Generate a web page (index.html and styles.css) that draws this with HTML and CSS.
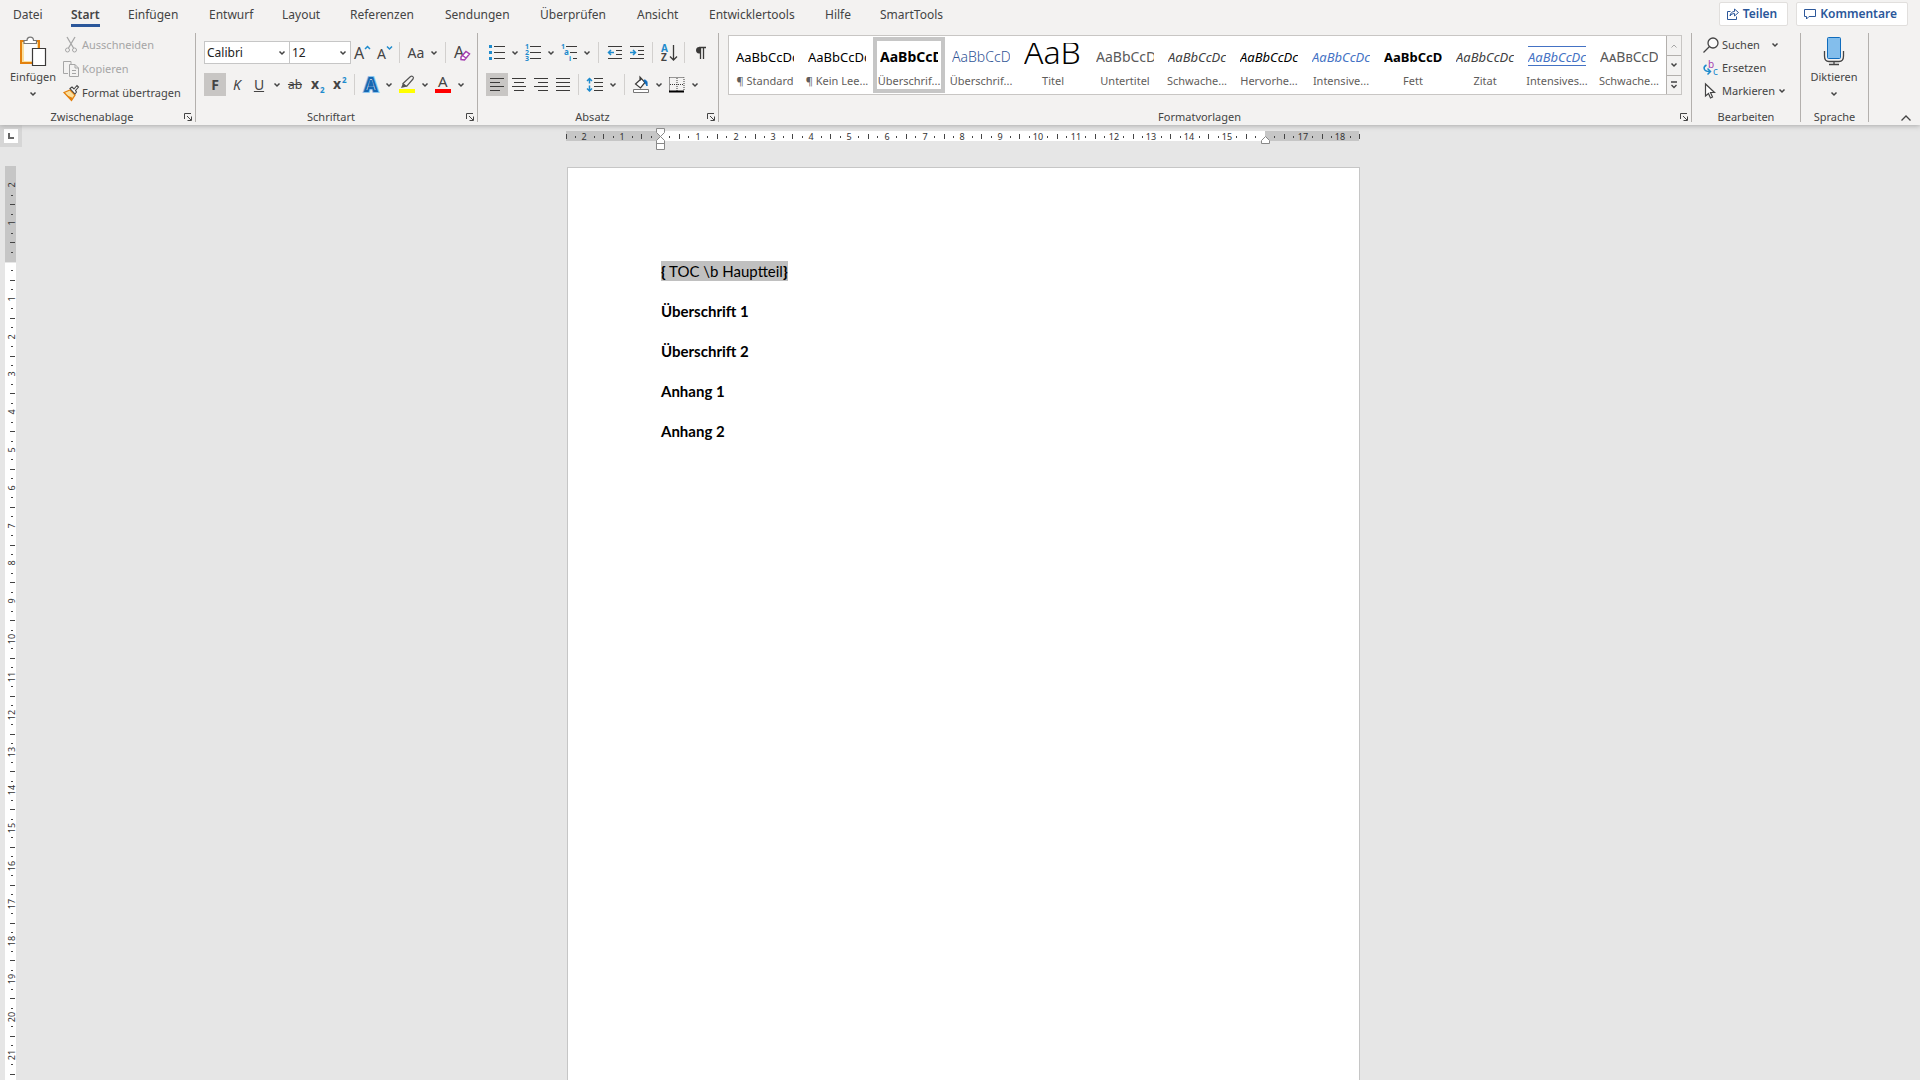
FILE: index.html
```html
<!DOCTYPE html>
<html lang="de">
<head>
<meta charset="utf-8">
<title>Word</title>
<link rel="stylesheet" href="styles.css">
</head>
<body>
<svg class="defs" aria-hidden="true">
  <symbol id="chev" viewBox="0 0 8 6"><path d="M1.500 1.500L4 4L6.500 1.500" fill="none" stroke="currentColor" stroke-width="1.500"/></symbol>
  <symbol id="launch" viewBox="0 0 8 8"><path d="M.5 6V.5H7M3 3L7 7M7.500 3.500V7.500H3.500" fill="none" stroke="currentColor"/></symbol>
</svg>
<header class="ribbon">
  <div class="topbar">
    <nav class="tabs">
      <a href="#">Datei</a>
      <a href="#" class="active">Start</a>
      <a href="#">Einfügen</a>
      <a href="#">Entwurf</a>
      <a href="#">Layout</a>
      <a href="#">Referenzen</a>
      <a href="#">Sendungen</a>
      <a href="#">Überprüfen</a>
      <a href="#">Ansicht</a>
      <a href="#">Entwicklertools</a>
      <a href="#">Hilfe</a>
      <a href="#">SmartTools</a>
    </nav>
    <div class="share">
      <button type="button"><svg width="12" height="12" viewBox="0 0 12 12"><path d="M3.500 3.500H.5V11.500H9.500V8.500M3 8C3.500 5 5 3.500 7.500 3.500V1L11.500 4.500L7.500 8V5.500C5.500 5.500 4 6.500 3 8Z" fill="none" stroke="currentColor"/></svg>Teilen</button>
      <button type="button"><svg width="12" height="12" viewBox="0 0 12 12"><path d="M.5 1.500H11.500V8.500H5L2.500 11V8.500H.5Z" fill="none" stroke="currentColor"/></svg>Kommentare</button>
    </div>
  </div>

  <div class="groups">
    <section class="group clipboard">
      <div class="content">
        <button type="button" class="big">
          <svg width="28" height="31" viewBox="0 0 28 31"><path d="M2 5H20V27H2Z" fill="#fbdf9d" stroke="#e3810f" stroke-width="2"/><path d="M5 8H18V25H5Z" fill="#fafafa"/><path d="M5 7.500V4.500H8C8 0 14.500 0 14.500 4.500H17.500V7.500Z" fill="#fff" stroke="#777" stroke-width="1.200"/><path d="M13.500 12.500H26.500V29.500H13.500Z" fill="#fff" stroke="#3b3a39" stroke-width="1.200"/></svg>
          <span>Einfügen</span>
          <svg class="chev"><use href="#chev"/></svg>
        </button>
        <div class="stack wide">
          <button type="button" disabled><svg width="16" height="16" viewBox="0 0 16 16"><path d="M4 0L10.500 11M12 0L5.500 11" fill="none" stroke="currentColor" stroke-width="1.300"/><circle cx="4.500" cy="13" r="2" fill="none" stroke="currentColor"/><circle cx="11.500" cy="13" r="2" fill="none" stroke="currentColor"/></svg>Ausschneiden</button>
          <button type="button" disabled><svg width="16" height="16" viewBox="0 0 16 16"><path d="M5 12.500H.5V.5H8V3M6.500 3.500H12L15.500 7V15.500H6.500ZM12 3.500V7H15.500M9 9.500H13M9 12.500H13" fill="none" stroke="currentColor"/></svg>Kopieren</button>
          <button type="button"><svg width="16" height="16" viewBox="0 0 16 16"><path d="M1 7.500L7 5L12 10L8.500 15.500Z" fill="#fbdf9d" stroke="#e3810f" stroke-width="1.300"/><path d="M3 10L10 13L8.500 15.500Z" fill="#e3810f"/><path d="M7 3.500L9 2L11 4L14 .5L15.500 2L12.500 5.500L13.500 7L12 9Z" fill="#fff" stroke="#444" stroke-width="1.100"/></svg>Format übertragen</button>
        </div>
      </div>
      <div class="title"><span>Zwischenablage</span><button type="button" class="launch" aria-label="Zwischenablage öffnen"><svg><use href="#launch"/></svg></button></div>
    </section>

    <section class="group font">
      <div class="content rows">
        <div class="row">
          <label class="combo"><select aria-label="Schriftart"><option>Calibri</option></select><svg class="chev"><use href="#chev"/></svg></label>
          <label class="combo size"><select aria-label="Schriftgrad"><option>12</option></select><svg class="chev"><use href="#chev"/></svg></label>
          <button type="button" class="tool" aria-label="Vergrößern"><svg width="18" height="20" viewBox="0 0 18 20"><text x="1" y="16" font-size="16" fill="#444">A</text><path d="M12 6L14.500 3.500L17 6" fill="none" stroke="#1e8bcd" stroke-width="1.500"/></svg></button>
          <button type="button" class="tool" aria-label="Verkleinern"><svg width="18" height="20" viewBox="0 0 18 20"><text x="2" y="16" font-size="14" fill="#444">A</text><path d="M12 3.500L14.500 6L17 3.500" fill="none" stroke="#1e8bcd" stroke-width="1.500"/></svg></button>
          <i class="sep"></i>
          <button type="button" class="tool aa">Aa</button>
          <button type="button" class="drop" aria-label="Groß-/Kleinschreibung"><svg class="chev"><use href="#chev"/></svg></button>
          <i class="sep"></i>
          <button type="button" class="tool" aria-label="Formatierung löschen"><svg width="18" height="20" viewBox="0 0 18 20"><text x="1" y="15" font-size="16" fill="#444">A</text><path d="M8 14L13 8.500L16.500 11L11.500 17L8 16.500ZM9.500 12.500L13 15" fill="#fff" stroke="#a440b0" stroke-width="1.500"/></svg></button>
        </div>
        <div class="row">
          <button type="button" class="tool on"><b>F</b></button>
          <button type="button" class="tool"><em>K</em></button>
          <button type="button" class="tool"><u>U</u></button>
          <button type="button" class="drop" aria-label="Unterstreichung"><svg class="chev"><use href="#chev"/></svg></button>
          <button type="button" class="tool small"><s>ab</s></button>
          <button type="button" class="tool" aria-label="Tiefgestellt"><svg width="18" height="20" viewBox="0 0 18 20"><text x="3" y="14" font-size="14" font-weight="700" fill="#444">x</text><text x="12" y="18" font-size="8" font-weight="700" fill="#1e8bcd">2</text></svg></button>
          <button type="button" class="tool" aria-label="Hochgestellt"><svg width="18" height="20" viewBox="0 0 18 20"><text x="3" y="14" font-size="14" font-weight="700" fill="#444">x</text><text x="12" y="8" font-size="8" font-weight="700" fill="#1e8bcd">2</text></svg></button>
          <i class="sep"></i>
          <button type="button" class="tool" aria-label="Texteffekte"><svg width="18" height="20" viewBox="0 0 18 20"><text x="3" y="16" font-size="17" font-weight="700" fill="#1667b0" stroke="#8cc4ee" stroke-width="4">A</text><text x="3" y="16" font-size="17" font-weight="700" fill="#fff" stroke="#1667b0" stroke-width="2">A</text></svg></button>
          <button type="button" class="drop" aria-label="Texteffekte wählen"><svg class="chev"><use href="#chev"/></svg></button>
          <button type="button" class="tool" aria-label="Hervorheben"><svg width="18" height="20" viewBox="0 0 18 20"><path d="M1 14H17V18H1Z" fill="#ff0"/><path d="M5 8.500L12.500 1.500C14 .5 16.500 2 15 4L9 11H6.500Z" fill="#f3f2f1" stroke="#555" stroke-width="1.200"/><path d="M5 8L9.500 11.500L7 12L3 13Z" fill="#555"/></svg></button>
          <button type="button" class="drop" aria-label="Hervorhebungsfarbe"><svg class="chev"><use href="#chev"/></svg></button>
          <button type="button" class="tool" aria-label="Schriftfarbe"><svg width="18" height="20" viewBox="0 0 18 20"><text x="4" y="12" font-size="15" fill="#444">A</text><path d="M1 14H17V18H1Z" fill="#f00"/></svg></button>
          <button type="button" class="drop" aria-label="Schriftfarbe wählen"><svg class="chev"><use href="#chev"/></svg></button>
        </div>
      </div>
      <div class="title"><span>Schriftart</span><button type="button" class="launch" aria-label="Schriftart öffnen"><svg><use href="#launch"/></svg></button></div>
    </section>

    <section class="group para">
      <div class="content rows">
        <div class="row">
          <button type="button" class="tool" aria-label="Aufzählung"><svg width="16" height="16" viewBox="0 0 16 16"><path d="M0 0H3V3H0ZM0 6H3V9H0ZM0 12H3V15H0Z" fill="#1e8bcd"/><path d="M5 1.500H16M5 7.500H16M5 13.500H16" stroke="#3b3a39"/></svg></button>
          <button type="button" class="drop" aria-label="Aufzählungszeichen"><svg class="chev"><use href="#chev"/></svg></button>
          <button type="button" class="tool" aria-label="Nummerierung"><svg width="16" height="18" viewBox="0 0 16 18"><g font-size="7" font-weight="700" fill="#1e8bcd"><text x="0" y="5">1</text><text x="0" y="11">2</text><text x="0" y="17">3</text></g><path d="M5 2.500H16M5 8.500H16M5 14.500H16" stroke="#3b3a39"/></svg></button>
          <button type="button" class="drop" aria-label="Nummerierungsart"><svg class="chev"><use href="#chev"/></svg></button>
          <button type="button" class="tool" aria-label="Liste mit mehreren Ebenen"><svg width="16" height="18" viewBox="0 0 16 18"><g font-size="7" font-weight="700" fill="#1e8bcd"><text x="0" y="5">1</text><text x="3" y="11" font-size="8">a</text><text x="8" y="17">i</text></g><path d="M5 2.500H16M9 8.500H16M12 14.500H16" stroke="#3b3a39"/></svg></button>
          <button type="button" class="drop" aria-label="Listenart"><svg class="chev"><use href="#chev"/></svg></button>
          <i class="sep"></i>
          <button type="button" class="tool" aria-label="Einzug verkleinern"><svg width="16" height="16" viewBox="0 0 16 16"><path d="M1 1.500H15M9 5.500H15M9 9.500H15M1 13.500H15" stroke="#3b3a39"/><path d="M7 7.500H1.500M4 5L1.500 7.500L4 10" fill="none" stroke="#1e8bcd" stroke-width="1.500"/></svg></button>
          <button type="button" class="tool" aria-label="Einzug vergrößern"><svg width="16" height="16" viewBox="0 0 16 16"><path d="M1 1.500H15M9 5.500H15M9 9.500H15M1 13.500H15" stroke="#3b3a39"/><path d="M1 7.500H6.500M4 5L6.500 7.500L4 10" fill="none" stroke="#1e8bcd" stroke-width="1.500"/></svg></button>
          <i class="sep"></i>
          <button type="button" class="tool" aria-label="Sortieren"><svg width="18" height="18" viewBox="0 0 18 18"><text x="1" y="8" font-size="10" font-weight="700" fill="#1e8bcd">A</text><text x="1" y="17" font-size="10" font-weight="700" fill="#444">Z</text><path d="M13.500 1V16M10 12.500L13.500 16L17 12.500" fill="none" stroke="#3b3a39" stroke-width="1.300"/></svg></button>
          <i class="sep"></i>
          <button type="button" class="tool" aria-label="Absatzmarken"><svg width="12" height="14" viewBox="0 0 12 14"><path d="M5.500 13V1M8.500 13V1M4 1.500H11" stroke="#3b3a39" stroke-width="1.300"/><path d="M5.500 1H4C0 1 0 7.500 4 7.500H5.500Z" fill="#3b3a39"/></svg></button>
        </div>
        <div class="row">
          <button type="button" class="tool on" aria-label="Linksbündig"><svg width="14" height="14" viewBox="0 0 14 14"><path d="M0 .5H14M0 4.500H10M0 8.500H14M0 12.500H10" stroke="#3b3a39"/></svg></button>
          <button type="button" class="tool" aria-label="Zentriert"><svg width="14" height="14" viewBox="0 0 14 14"><path d="M0 .5H14M2 4.500H12M0 8.500H14M2 12.500H12" stroke="#3b3a39"/></svg></button>
          <button type="button" class="tool" aria-label="Rechtsbündig"><svg width="14" height="14" viewBox="0 0 14 14"><path d="M0 .5H14M4 4.500H14M0 8.500H14M4 12.500H14" stroke="#3b3a39"/></svg></button>
          <button type="button" class="tool" aria-label="Blocksatz"><svg width="14" height="14" viewBox="0 0 14 14"><path d="M0 .5H14M0 4.500H14M0 8.500H14M0 12.500H14" stroke="#3b3a39"/></svg></button>
          <i class="sep"></i>
          <button type="button" class="tool" aria-label="Zeilenabstand"><svg width="18" height="16" viewBox="0 0 18 16"><path d="M8 1.500H17M8 5.500H17M8 9.500H17M8 13.500H17" stroke="#3b3a39"/><path d="M3.500 1V6.500M1 4L3.500 1.500L6 4M3.500 8.500V14.500M1 11.500L3.500 14L6 11.500" fill="none" stroke="#1e8bcd" stroke-width="1.500"/></svg></button>
          <button type="button" class="drop" aria-label="Abstand wählen"><svg class="chev"><use href="#chev"/></svg></button>
          <i class="sep"></i>
          <button type="button" class="tool" aria-label="Schattierung"><svg width="18" height="18" viewBox="0 0 18 18"><path d="M9 3L3.500 8L8.500 12L13 6.500L8 1V5" fill="#fff" stroke="#3b3a39" stroke-width="1.200"/><path d="M12 4C15 4 15.500 6 15 10C14 8 13 7 13 6.500Z" fill="#0f6cbd" stroke="#0f6cbd"/><path d="M1.500 13.500H16.500V16.500H1.500Z" fill="#fff" stroke="#777"/></svg></button>
          <button type="button" class="drop" aria-label="Schattierungsfarbe"><svg class="chev"><use href="#chev"/></svg></button>
          <button type="button" class="tool" aria-label="Rahmen"><svg width="16" height="16" viewBox="0 0 16 16"><path d="M.5 .5H15V14M.5 .5V14M8 1V14M1 7.500H15" fill="none" stroke="#3b3a39" stroke-dasharray="1 1"/><path d="M0 14.500H15" stroke="#000" stroke-width="2"/></svg></button>
          <button type="button" class="drop" aria-label="Rahmenart"><svg class="chev"><use href="#chev"/></svg></button>
        </div>
      </div>
      <div class="title"><span>Absatz</span><button type="button" class="launch" aria-label="Absatz öffnen"><svg><use href="#launch"/></svg></button></div>
    </section>

    <section class="group styles">
      <div class="content">
        <div class="gallery">
          <div class="items">
            <button type="button"><span class="pv">AaBbCcDc</span><span class="nm">¶ Standard</span></button>
            <button type="button"><span class="pv">AaBbCcDc</span><span class="nm">¶ Kein Lee...</span></button>
            <button type="button" class="selected"><span class="pv strong top">AaBbCcD</span><span class="nm">Überschrif...</span></button>
            <button type="button"><span class="pv head">AaBbCcD</span><span class="nm">Überschrif...</span></button>
            <button type="button"><span class="pv huge">AaB</span><span class="nm">Titel</span></button>
            <button type="button"><span class="pv sub">AaBbCcD</span><span class="nm">Untertitel</span></button>
            <button type="button"><span class="pv it gray">AaBbCcDc</span><span class="nm">Schwache...</span></button>
            <button type="button"><span class="pv it">AaBbCcDc</span><span class="nm">Hervorhe...</span></button>
            <button type="button"><span class="pv it blue">AaBbCcDc</span><span class="nm">Intensive...</span></button>
            <button type="button"><span class="pv strong">AaBbCcDc</span><span class="nm">Fett</span></button>
            <button type="button"><span class="pv it gray">AaBbCcDc</span><span class="nm">Zitat</span></button>
            <button type="button"><span class="pv it blue lined">AaBbCcDc</span><span class="nm">Intensives...</span></button>
            <button type="button"><span class="pv caps">AaBbCcDd</span><span class="nm">Schwache...</span></button>
          </div>
          <div class="scroll">
            <button type="button" disabled aria-label="Nach oben"><svg width="8" height="6" viewBox="0 0 8 6"><path d="M1.500 4.500L4 2L6.500 4.500" fill="none" stroke="currentColor"/></svg></button>
            <button type="button" aria-label="Nach unten"><svg class="chev"><use href="#chev"/></svg></button>
            <button type="button" aria-label="Weitere"><svg width="8" height="8" viewBox="0 0 8 8"><path d="M1 1H7M1.500 4L4 6.500L6.500 4" fill="none" stroke="currentColor" stroke-width="1.300"/></svg></button>
          </div>
        </div>
      </div>
      <div class="title"><span>Formatvorlagen</span><button type="button" class="launch" aria-label="Formatvorlagen öffnen"><svg><use href="#launch"/></svg></button></div>
    </section>

    <section class="group edit">
      <div class="content">
        <div class="stack">
          <button type="button"><svg width="16" height="16" viewBox="0 0 16 16"><circle cx="10" cy="6" r="5" fill="#fafafa" stroke="#444" stroke-width="1.300"/><path d="M6.500 9.500L.5 15.500" stroke="#444" stroke-width="1.300"/></svg>Suchen<svg class="chev far"><use href="#chev"/></svg></button>
          <button type="button"><svg width="16" height="16" viewBox="0 0 16 16"><text x="5" y="8" font-size="10" fill="#a440b0">b</text><text x="10" y="15" font-size="10" fill="#1e8bcd">c</text><path d="M3.500 5C-.5 7 .5 11.500 6.500 11.500M4.500 8.500L7.500 11.500L4.500 14.500" fill="none" stroke="#1e8bcd" stroke-width="1.500"/></svg>Ersetzen</button>
          <button type="button"><svg width="16" height="16" viewBox="0 0 16 16"><path d="M2.500 1V13L5.500 10.500L7.500 15L9.500 14L7.500 9.500H11.500Z" fill="#fff" stroke="#444" stroke-width="1.200"/></svg>Markieren<svg class="chev"><use href="#chev"/></svg></button>
        </div>
      </div>
      <div class="title"><span>Bearbeiten</span></div>
    </section>

    <section class="group voice">
      <div class="content">
        <button type="button" class="big">
          <svg width="20" height="31" viewBox="0 0 20 31"><rect x="3.500" y="1.500" width="13" height="21" rx="1" fill="#83beec" stroke="#0f6cbd"/><path d="M.5 15V20C.5 23 2 25.500 5 25.500H15C18 25.500 19.500 23 19.500 20V15M10 25.500V28.500M5 28.500H15" fill="none" stroke="#444" stroke-width="1.300"/></svg>
          <span>Diktieren</span>
          <svg class="chev"><use href="#chev"/></svg>
        </button>
      </div>
      <div class="title"><span>Sprache</span></div>
    </section>
    <button type="button" class="collapse" aria-label="Menüband reduzieren"><svg width="10" height="6" viewBox="0 0 10 6"><path d="M.5 5.500L5 1L9.500 5.500" fill="none" stroke="currentColor" stroke-width="1.300"/></svg></button>
  </div>
</header>

<main class="workspace">
  <aside class="side">
    <button type="button" class="tabstop" aria-label="Tabstopp"><svg width="6" height="6" viewBox="0 0 6 6"><path d="M1 0V5H6" fill="none" stroke="#666" stroke-width="2"/></svg></button>
    <svg class="vruler" id="vruler" aria-hidden="true"></svg>
  </aside>
  <div class="desk">
    <svg class="hruler" id="hruler" viewBox="0 0 794 22" aria-hidden="true"></svg>
    <article class="page">
      <p class="field"><span><b>{</b> TOC \b Hauptteil<b>}</b></span></p>
      <p>Überschrift 1</p>
      <p>Überschrift 2</p>
      <p>Anhang 1</p>
      <p>Anhang 2</p>
    </article>
  </div>
</main>
<script src="ruler.js"></script>
</body>
</html>
```
FILE: styles.css
```css
* { box-sizing: border-box; }
body {
  margin: 0;
  height: 100vh;
  display: flex;
  flex-direction: column;
  overflow: hidden;
  background: #e6e6e6;
  color: #444;
  font: 11px/16px "Noto Sans", sans-serif;
}
svg { display: block; flex: none; }
svg text { font-family: "Noto Sans", sans-serif; }
.defs { position: absolute; width: 0; height: 0; }
button {
  margin: 0;
  padding: 0;
  border: 0;
  background: none;
  color: inherit;
  font: inherit;
  display: flex;
  align-items: center;
}
button svg { overflow: visible; }
button:disabled { color: #a6a6a6; }
.chev { width: 8px; height: 6px; }

.ribbon {
  position: relative;
  background: #f3f2f1;
  box-shadow: 0 1px 5px #aaa;
}
.topbar {
  display: flex;
  justify-content: space-between;
  height: 33px;
  padding: 2px 12px 0 13px;
}
.tabs {
  display: grid;
  grid-template-columns: 58px 57px 81px 73px 68px 95px 95px 97px 72px 116px 55px 66px;
  justify-items: start;
  height: 25px;
  font-size: 12px;
  line-height: 26px;
}
.tabs a { height: 25px; color: #444; text-decoration: none; white-space: nowrap; }
.tabs .active { font-weight: 600; border-bottom: 3px solid #2b579a; }
.share { display: flex; gap: 8px; }
.share button {
  gap: 4px;
  height: 24px;
  padding: 0 10px 0 7px;
  border: 1px solid #e1dfdd;
  border-radius: 2px;
  background: #fff;
  color: #2b579a;
  font-size: 12px;
  font-weight: 600;
}

.groups { display: flex; height: 92px; }
.group {
  display: flex;
  flex-direction: column;
  justify-content: space-between;
  border-right: 1px solid;
  border-image: linear-gradient(#b3b0ad 88px, transparent 88px) 1;
}
.clipboard { width: 196px; }
.font { width: 282px; }
.para { width: 241px; }
.styles { flex: 1; min-width: 0; }
.edit { width: 109px; }
.voice { width: 68px; }
.content { display: flex; }
.title { display: flex; align-items: center; height: 16px; padding: 0 1px 0 0; }
.title span { flex: 1; text-align: center; }
.launch { width: 10px; }
.launch svg { width: 8px; height: 8px; }
.edit .title, .voice .title { padding: 0; }

.big { flex-direction: column; gap: 2px; padding-top: 3px; }
.clipboard .big { width: 52px; margin: 0 4px 0 7px; }
.voice .big { width: 66px; }
.big .chev { margin: 4px 0; }
.stack { display: flex; flex-direction: column; }
.stack button { height: 23px; gap: 3px; white-space: nowrap; }
.stack.wide button { height: 24px; }
.edit .stack { padding: 0 0 0 11px; }
.stack .far { margin-left: 8px; }

.rows { flex-direction: column; gap: 9px; padding: 8px 0 0 8px; }
.row { display: flex; align-items: center; height: 23px; }
.tool, .drop { width: 22px; height: 23px; justify-content: center; font-size: 14px; }
.drop { width: 14px; }
.tool.small { font-size: 12px; }
.tool.on { background: #c8c6c4; }
.sep { width: 1px; height: 21px; margin: 0 5px 0 4px; background: #d2d0ce; }
.combo { position: relative; display: block; width: 86px; height: 23px; margin-right: -1px; }
.combo.size { width: 62px; margin-right: 0; }
.combo .chev { position: absolute; right: 4px; top: 9px; pointer-events: none; }
.combo select {
  appearance: none;
  width: 100%;
  height: 100%;
  margin: 0;
  padding: 0 2px;
  border: 1px solid #c6c6c6;
  border-radius: 0;
  background: #fff;
  color: #222;
  font: 12px "Noto Sans", sans-serif;
}

.styles .content { padding: 2px 9px 0; }
.gallery { display: flex; width: 100%; height: 60px; border: 1px solid #c8c6c4; background: #fff; }
.items { display: grid; grid-template-columns: repeat(13, 72px); flex: 1; overflow: hidden; }
.items button {
  flex-direction: column;
  margin: 1px 0;
  border: 4px solid transparent;
}
.items .selected { border-color: #c6c6c6; }
.pv {
  width: 58px;
  height: 23px;
  margin: 2px 0 7px;
  overflow: hidden;
  color: #000;
  font-size: 13px;
  line-height: 28px;
  text-align: left;
  white-space: nowrap;
}
.nm { color: #5f5d5b; }
.strong { font-weight: 700; }
.top { font-size: 14px; }
.it { font-style: italic; }
.gray { color: #404040; }
.blue { color: #4472c4; }
.head { color: #2f5496; font-weight: 300; font-size: 14px; }
.huge { font-weight: 300; font-size: 32px; line-height: 18px; }
.sub { color: #5a5a5a; font-size: 14px; }
.caps { color: #5a5a5a; font-size: 14px; font-variant: small-caps; }
.lined { height: 20px; margin-top: 5px; border: solid #4472c4; border-width: 1px 0; line-height: 20px; }
.scroll { display: grid; grid-template-rows: repeat(3, 1fr); width: 15px; }
.scroll button { justify-content: center; border: solid #b3b0ad; border-width: 1px 0 0 1px; background: #f3f2f1; }
.scroll button:first-child { border-top: 0; }
.collapse { margin: auto 9px 4px 32px; }

.workspace { display: flex; flex: 1; min-height: 0; padding-right: 10px; }
.side { display: flex; flex-direction: column; width: 17px; }
.tabstop { justify-content: center; width: 22px; height: 22px; border: 4px solid #d6d6d6; background: #fff; flex: none; }
.vruler { flex: 1; width: 12px; margin: 19px 0 0 5px; }
.desk { flex: 1; display: flex; flex-direction: column; align-items: center; padding-top: 6px; }
.hruler { width: 794px; height: 22px; margin: 0 1px 14px 0; overflow: visible; }
.hruler text, .vruler text { font-size: 9px; fill: #333; text-anchor: middle; }
.page {
  flex: 1;
  width: 793px;
  padding: 93px;
  border: 1px solid #c6c6c6;
  border-bottom: 0;
  background: #fff;
  color: #000;
  font: 15px/20px Lato, sans-serif;
}
.page p { margin: 0 0 20px; font-weight: 700; }
.page .field { font-weight: 400; }
.field span { display: inline-block; background: #c0c0c0; }
.field b { font-weight: 900; }
```
FILE: ruler.js
```js
const CM = 37.8;
const NS = "http://www.w3.org/2000/svg";

function add(parent, tag, attrs, text) {
  const el = document.createElementNS(NS, tag);
  for (const key in attrs) el.setAttribute(key, attrs[key]);
  if (text !== undefined) el.textContent = text;
  parent.appendChild(el);
}

// Quarter-centimetre marks: a dot, a half-way bar, a dot, then the number.
function marks(from, to, zero, length, draw) {
  for (let q = from; q <= to; q++) {
    const pos = Math.round(zero + q * CM / 4);
    if (q === 0 || pos < 0 || pos >= length) continue;
    draw(pos, q % 4 === 0 ? "number" : q % 2 === 0 ? "bar" : "dot", Math.abs(q / 4));
  }
}

const h = document.getElementById("hruler");
add(h, "rect", { x: 0, y: 0, width: 793, height: 10, fill: "#c6c6c6" });
add(h, "rect", { x: 95, y: 0, width: 604, height: 10, fill: "#fff" });
marks(-10, 74, 94, 794, (p, kind, n) => {
  if (kind === "number" && n !== 16) add(h, "text", { x: p, y: 9 }, n);
  if (kind === "bar") add(h, "rect", { x: p, y: 3, width: 1, height: 5, fill: "#444" });
  if (kind === "dot") add(h, "rect", { x: p, y: 5, width: 1, height: 2, fill: "#444" });
});
const box = { fill: "#fff", stroke: "#888" };
add(h, "path", { d: "M90.500 -2.500V1.500L94.500 5.500L90.500 9.500V18.500H98.500V9.500L94.500 5.500L98.500 1.500V-2.500ZM90.500 12.500H98.500", ...box });
add(h, "path", { d: "M695.500 12.500V9.500L699.500 5.500L703.500 9.500V12.500Z", ...box });

const v = document.getElementById("vruler");
const size = v.clientHeight || v.getBoundingClientRect().height;
add(v, "rect", { x: 0, y: 0, width: 11, height: 96, fill: "#c6c6c6" });
add(v, "rect", { x: 0, y: 97, width: 11, height: size, fill: "#fff" });
marks(-8, 400, 95, size, (p, kind, n) => {
  if (kind === "number") add(v, "text", { transform: `translate(10 ${p}) rotate(-90)` }, n);
  if (kind === "bar") add(v, "rect", { x: 5, y: p, width: 5, height: 1, fill: "#444" });
  if (kind === "dot") add(v, "rect", { x: 6, y: p, width: 2, height: 1, fill: "#444" });
});
```
